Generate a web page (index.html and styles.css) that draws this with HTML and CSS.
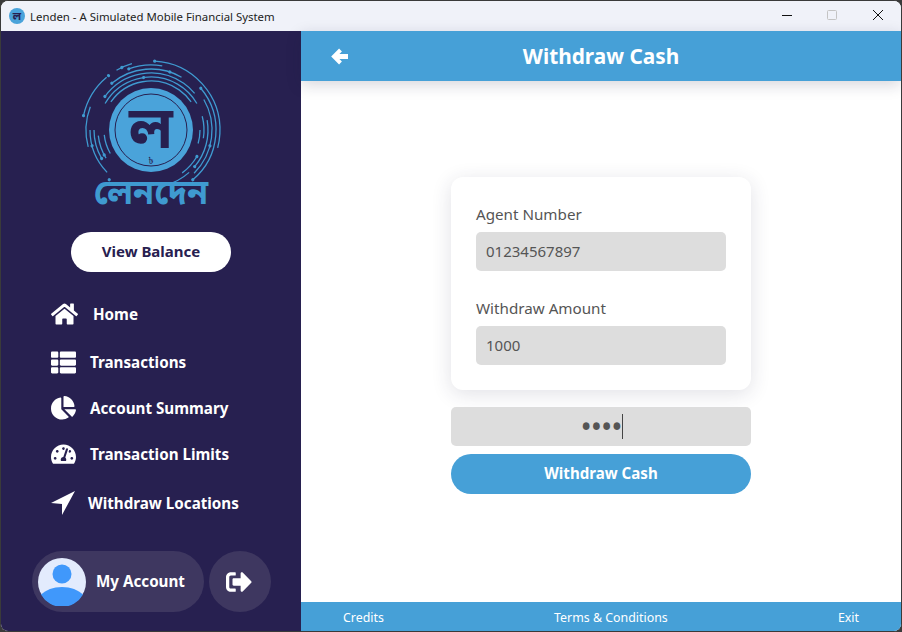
FILE: index.html
```html
<!DOCTYPE html>
<html lang="en">
<head>
    <meta charset="UTF-8">
    <title>Lenden - A Simulated Mobile Financial System</title>
    <link rel="stylesheet" href="styles.css">
</head>
<body>
    <div class="window">
        <div class="titlebar">
            <svg class="appIcon" viewBox="0 0 16 16">
                <circle cx="8" cy="8" r="8" fill="#4aa3da"/>
                <text class="appLetter" x="8" y="11.500" text-anchor="middle">ল</text>
            </svg>
            <span class="appTitle">Lenden - A Simulated Mobile Financial System</span>
            <div class="winButtons">
                <svg class="winBtn" viewBox="0 0 46 30"><path d="M19 14.500h10" stroke="#111" stroke-width="1"/></svg>
                <svg class="winBtn" viewBox="0 0 46 30"><rect x="18.500" y="9.500" width="9" height="9" rx="1" fill="none" stroke="#c4c4c4"/></svg>
                <svg class="winBtn" viewBox="0 0 46 30"><path d="M18 9l10 10M28 9l-10 10" stroke="#111" stroke-width="1"/></svg>
            </div>
        </div>
        <div class="app">
            <div class="sidebar">
                <svg class="logo" viewBox="0 0 150 155">
                    <g fill="none" stroke="#3f9ad0" stroke-width="1.300">
                        <circle cx="75" cy="74" r="69" pathLength="360" stroke-dasharray="102 360" transform="rotate(-87 75 74)"/>
                        <circle cx="75" cy="74" r="69" pathLength="360" stroke-dasharray="38 360" transform="rotate(-168 75 74)"/>
                        <circle cx="75" cy="74" r="69" pathLength="360" stroke-dasharray="14 360" transform="rotate(-120 75 74)"/>
                        <circle cx="75" cy="74" r="65" pathLength="360" stroke-dasharray="30 360" transform="rotate(-110 75 74)"/>
                        <circle cx="75" cy="74" r="65" pathLength="360" stroke-dasharray="90 360" transform="rotate(-40 75 74)"/>
                        <circle cx="75" cy="74" r="65" pathLength="360" stroke-dasharray="36 360" transform="rotate(165 75 74)"/>
                        <circle cx="75" cy="74" r="61" pathLength="360" stroke-dasharray="70 360" transform="rotate(-130 75 74)"/>
                        <circle cx="75" cy="74" r="61" pathLength="360" stroke-dasharray="75 360" transform="rotate(-30 75 74)"/>
                        <circle cx="75" cy="74" r="61" pathLength="360" stroke-dasharray="44 360" transform="rotate(136 75 74)"/>
                        <circle cx="75" cy="74" r="57" pathLength="360" stroke-dasharray="105 360" transform="rotate(-145 75 74)"/>
                        <circle cx="75" cy="74" r="57" pathLength="360" stroke-dasharray="50 360" transform="rotate(-10 75 74)"/>
                        <circle cx="75" cy="74" r="57" pathLength="360" stroke-dasharray="28 360" transform="rotate(48 75 74)"/>
                        <circle cx="75" cy="74" r="57" pathLength="360" stroke-dasharray="30 360" transform="rotate(150 75 74)"/>
                        <circle cx="75" cy="74" r="53" pathLength="360" stroke-dasharray="120 360" transform="rotate(-150 75 74)"/>
                        <circle cx="75" cy="74" r="53" pathLength="360" stroke-dasharray="24 360" transform="rotate(-15 75 74)"/>
                        <circle cx="75" cy="74" r="53" pathLength="360" stroke-dasharray="24 360" transform="rotate(30 75 74)"/>
                        <circle cx="75" cy="74" r="53" pathLength="360" stroke-dasharray="26 360" transform="rotate(148 75 74)"/>
                        <circle cx="75" cy="74" r="49" pathLength="360" stroke-dasharray="110 360" transform="rotate(-145 75 74)"/>
                        <circle cx="75" cy="74" r="49" pathLength="360" stroke-dasharray="16 360" transform="rotate(0 75 74)"/>
                        <circle cx="75" cy="74" r="47" pathLength="360" stroke-dasharray="24 360" transform="rotate(150 75 74)"/>
                    </g>
                    <g fill="#3f9ad0">
                        <circle cx="75" cy="5" r="1.600" transform="rotate(3 75 74)"/>
                        <circle cx="75" cy="5" r="1.600" transform="rotate(-38 75 74)"/>
                        <circle cx="75" cy="5" r="1.600" transform="rotate(-78 75 74)"/>
                        <circle cx="75" cy="5" r="1.600" transform="rotate(-25 75 74)"/>
                        <circle cx="75" cy="9" r="1.600" transform="rotate(50 75 74)"/>
                        <circle cx="75" cy="9" r="1.600" transform="rotate(-20 75 74)"/>
                        <circle cx="75" cy="9" r="1.600" transform="rotate(140 75 74)"/>
                        <circle cx="75" cy="9" r="1.600" transform="rotate(-140 75 74)"/>
                        <circle cx="75" cy="13" r="1.600" transform="rotate(-40 75 74)"/>
                        <circle cx="75" cy="13" r="1.600" transform="rotate(18 75 74)"/>
                        <circle cx="75" cy="13" r="1.600" transform="rotate(105 75 74)"/>
                        <circle cx="75" cy="13" r="1.600" transform="rotate(-105 75 74)"/>
                        <circle cx="75" cy="17" r="1.600" transform="rotate(-54 75 74)"/>
                        <circle cx="75" cy="17" r="1.600" transform="rotate(130 75 74)"/>
                        <circle cx="75" cy="17" r="1.600" transform="rotate(-120 75 74)"/>
                        <circle cx="75" cy="21" r="1.600" transform="rotate(-8 75 74)"/>
                        <circle cx="75" cy="21" r="1.600" transform="rotate(120 75 74)"/>
                        <circle cx="75" cy="21" r="1.600" transform="rotate(-118 75 74)"/>
                    </g>
                    <circle cx="75" cy="74" r="42" fill="#4aa3da"/>
                    <circle cx="75" cy="74" r="36" fill="none" stroke="#272050" stroke-width="1"/>
                    <text class="logoLetter" x="75" y="92" text-anchor="middle">ল</text>
                    <text class="logoTaka" x="75" y="108" text-anchor="middle">৳</text>
                    <text class="logoWord" x="75" y="148" text-anchor="middle">লেনদেন</text>
                </svg>
                <button class="balanceBtn"><span class="btnText">View Balance</span></button>
                <div class="nav">
                    <div class="navItem homeItem">
                        <span class="navIcon"><svg width="27" viewBox="0 0 576 512"><path d="M280.37 148.26L96 300.11V464a16 16 0 0 0 16 16l112.06-.29a16 16 0 0 0 15.92-16V368a16 16 0 0 1 16-16h64a16 16 0 0 1 16 16v95.64a16 16 0 0 0 16 16.05L464 480a16 16 0 0 0 16-16V300L295.67 148.26a12.19 12.19 0 0 0-15.3 0zM571.6 251.47L488 182.56V44.05a12 12 0 0 0-12-12h-56a12 12 0 0 0-12 12v72.61L318.47 43a48 48 0 0 0-61 0L4.34 251.47a12 12 0 0 0-1.6 16.9l25.5 31A12 12 0 0 0 45.15 301l235.22-193.74a12.19 12.19 0 0 1 15.3 0L530.9 301a12 12 0 0 0 16.9-1.6l25.5-31a12 12 0 0 0-1.7-16.93z"/></svg></span>
                        Home
                    </div>
                    <div class="navItem listItem">
                        <span class="navIcon"><svg width="25" viewBox="0 0 512 512"><path d="M149.333 216v80c0 13.255-10.745 24-24 24H24c-13.255 0-24-10.745-24-24v-80c0-13.255 10.745-24 24-24h101.333c13.255 0 24 10.745 24 24zM0 376v80c0 13.255 10.745 24 24 24h101.333c13.255 0 24-10.745 24-24v-80c0-13.255-10.745-24-24-24H24c-13.255 0-24 10.745-24 24zM125.333 32H24C10.745 32 0 42.745 0 56v80c0 13.255 10.745 24 24 24h101.333c13.255 0 24-10.745 24-24V56c0-13.255-10.745-24-24-24zm80 448H488c13.255 0 24-10.745 24-24v-80c0-13.255-10.745-24-24-24H205.333c-13.255 0-24 10.745-24 24v80c0 13.255 10.745 24 24 24zm-24-424v80c0 13.255 10.745 24 24 24H488c13.255 0 24-10.745 24-24V56c0-13.255-10.745-24-24-24H205.333c-13.255 0-24 10.745-24 24zm24 264H488c13.255 0 24-10.745 24-24v-80c0-13.255-10.745-24-24-24H205.333c-13.255 0-24 10.745-24 24v80c0 13.255 10.745 24 24 24z"/></svg></span>
                        Transactions
                    </div>
                    <div class="navItem">
                        <span class="navIcon"><svg width="25" viewBox="0 0 544 512"><path d="M527.79 288H290.5l158.03 158.03c6.04 6.04 15.98 6.53 22.19.68 38.7-36.46 65.32-85.61 73.13-140.86 1.34-9.46-6.51-17.85-16.06-17.85zm-15.83-64.8C503.72 103.74 408.26 8.28 288.8.04 279.68-.59 272 7.1 272 16.24V240h223.77c9.14 0 16.82-7.68 16.19-16.8zM224 288V50.71c0-9.55-8.39-17.4-17.84-16.06C86.99 51.49-4.1 155.6.14 280.37 4.5 408.51 114.83 513.59 243.03 511.98c50.4-.63 96.97-16.87 135.26-44.03 7.9-5.6 8.42-17.23 1.57-24.08L224 288z"/></svg></span>
                        Account Summary
                    </div>
                    <div class="navItem">
                        <span class="navIcon"><svg width="25" viewBox="0 0 576 512"><path d="M288 32C128.94 32 0 160.94 0 320c0 52.8 14.25 102.26 39.06 144.8 5.61 9.62 16.3 15.2 27.44 15.2h443c11.14 0 21.83-5.58 27.44-15.2C561.75 422.26 576 372.8 576 320c0-159.06-128.94-288-288-288zm0 64c14.71 0 26.58 10.13 30.32 23.65-1.11 2.26-2.64 4.23-3.45 6.67l-9.22 27.67c-5.13 3.49-10.97 6.01-17.64 6.01-17.67 0-32-14.33-32-32S270.33 96 288 96zM96 384c-17.67 0-32-14.33-32-32s14.33-32 32-32 32 14.33 32 32-14.33 32-32 32zm48-160c-17.67 0-32-14.33-32-32s14.33-32 32-32 32 14.33 32 32-14.33 32-32 32zm246.77-72.41l-61.33 184C343.13 347.33 352 364.54 352 384c0 11.72-3.38 22.55-8.88 32H232.88c-5.5-9.45-8.88-20.28-8.88-32 0-33.94 26.5-61.43 59.9-63.59l61.34-184.01c4.17-12.56 17.73-19.45 30.36-15.17 12.57 4.19 19.35 17.79 15.17 30.36zm14.66 57.2l15.52-46.55c3.47-1.29 7.13-2.23 11.05-2.23 17.67 0 32 14.33 32 32s-14.33 32-32 32c-11.38-.01-20.89-6.28-26.57-15.22zM480 384c-17.67 0-32-14.33-32-32s14.33-32 32-32 32 14.33 32 32-14.33 32-32 32z"/></svg></span>
                        Transaction Limits
                    </div>
                    <div class="navItem locationItem">
                        <span class="navIcon"><svg width="24" viewBox="0 0 24 24"><path d="M24 0L11 24 11 13 0 12z"/></svg></span>
                        Withdraw Locations
                    </div>
                </div>
                <div class="accountRow">
                    <div class="accountPill">
                        <svg class="avatar" viewBox="0 0 48 48">
                            <circle cx="24" cy="24" r="24" fill="#e3ebfd"/>
                            <circle cx="24" cy="16" r="9.500" fill="#4098fb"/>
                            <path d="M3 36.500C8 32 15 29 24 29s16 3 21 7.500A24 24 0 0 1 3 36.500z" fill="#4098fb"/>
                        </svg>
                        <span class="btnText">My Account</span>
                    </div>
                    <div class="logoutBtn">
                        <svg width="26" viewBox="0 0 512 512"><path d="M497 273L329 441c-15 15-41 4.500-41-17v-96H152c-13.300 0-24-10.700-24-24v-96c0-13.300 10.700-24 24-24h136V88c0-21.400 25.900-32 41-17l168 168c9.300 9.400 9.300 24.600 0 34zM192 436v-40c0-6.600-5.400-12-12-12H96c-17.700 0-32-14.300-32-32V160c0-17.700 14.300-32 32-32h84c6.600 0 12-5.400 12-12V76c0-6.600-5.400-12-12-12H96c-53 0-96 43-96 96v192c0 53 43 96 96 96h84c6.600 0 12-5.400 12-12z"/></svg>
                    </div>
                </div>
            </div>
            <div class="main">
                <div class="header">
                    <svg class="backArrow" width="17" height="17" viewBox="0 0 17 17">
                        <path d="M9.500 2L3 8.500 9.500 15" fill="none" stroke="white" stroke-width="4"/>
                        <path d="M4 8.500H17" stroke="white" stroke-width="5"/>
                    </svg>
                    <div class="headerTitle">Withdraw Cash</div>
                </div>
                <div class="content">
                    <div class="formStack">
                        <div class="card">
                            <div class="fieldLabel">Agent Number</div>
                            <div class="field">01234567897</div>
                            <div class="fieldLabel secondLabel">Withdraw Amount</div>
                            <div class="field">1000</div>
                        </div>
                        <div class="field pinField"><span class="pinDots">••••</span><span class="caret"></span></div>
                        <button class="withdrawBtn"><span class="btnText">Withdraw Cash</span></button>
                    </div>
                </div>
                <div class="footer">
                    <span>Credits</span>
                    <span>Terms &amp; Conditions</span>
                    <span>Exit</span>
                </div>
            </div>
        </div>
    </div>
</body>
</html>
```

FILE: styles.css
```css
html, body
{
    margin: 0;
    height: 100%;
    background-color: #3a3a3a;
}
body
{
    font-family: "Noto Sans", "Open Sans", sans-serif;
}
.window
{
    height: 630px;
    border: 1px solid #3a3a3a;
    border-radius: 8px;
    overflow: hidden;
    display: flex;
    flex-direction: column;
    background-color: white;
}
.titlebar
{
    height: 30px;
    flex: none;
    display: flex;
    align-items: center;
    background-color: #f0f2f9;
    padding-left: 8px;
}
.appIcon
{
    width: 16px;
    height: 16px;
}
.appLetter
{
    font-size: 11px;
    font-weight: 700;
    fill: #272050;
    font-family: "Noto Sans Bengali", "Noto Sans", sans-serif;
}
.appTitle
{
    font-size: 11.400px;
    color: #222;
    margin-left: 5px;
}
.winButtons
{
    margin-left: auto;
    display: flex;
}
.winBtn
{
    width: 46px;
    height: 30px;
    display: block;
}
.app
{
    flex: 1;
    display: flex;
    min-height: 0;
}
.sidebar
{
    width: 300px;
    flex: none;
    background-color: #272050;
    display: flex;
    flex-direction: column;
    align-items: center;
}
.logo
{
    width: 150px;
    height: 155px;
    margin-top: 25px;
    flex: none;
    overflow: visible;
}
.logoLetter
{
    font-size: 58px;
    font-weight: 700;
    fill: #272050;
    font-family: "Noto Sans Bengali", "Noto Sans", sans-serif;
}
.logoTaka
{
    font-size: 9px;
    fill: #272050;
    font-family: "Noto Sans Bengali", "Noto Sans", sans-serif;
}
.logoWord
{
    font-size: 34px;
    font-weight: 700;
    fill: #3f9ad0;
    font-family: "Noto Sans Bengali", "Noto Sans", sans-serif;
}
.balanceBtn
{
    width: 160px;
    height: 40px;
    margin-top: 21px;
    border: none;
    border-radius: 20px;
    background-color: white;
    color: #272050;
    font-family: inherit;
    font-size: 15px;
    font-weight: 700;
}
.btnText
{
    display: block;
    margin-bottom: 2px;
}
.nav
{
    align-self: stretch;
    padding-left: 50px;
    margin-top: 19px;
}
.navItem
{
    height: 46px;
    display: flex;
    align-items: center;
    color: white;
    font-size: 15.200px;
    font-weight: 700;
}
.listItem
{
    margin-top: 2px;
}
.navIcon
{
    width: 39px;
    flex: none;
    display: flex;
    align-items: center;
}
.navIcon svg
{
    fill: white;
    display: block;
}
.homeItem .navIcon
{
    width: 42px;
}
.locationItem
{
    margin-top: 3px;
}
.locationItem .navIcon
{
    width: 37px;
}
.accountRow
{
    margin-top: auto;
    margin-bottom: 19px;
    align-self: stretch;
    padding-left: 31px;
    display: flex;
    gap: 5px;
}
.accountPill
{
    width: 172px;
    height: 61px;
    border-radius: 31px;
    background-color: #3e3760;
    color: white;
    font-size: 15.200px;
    font-weight: 700;
    display: flex;
    align-items: center;
    gap: 10px;
    padding-left: 6px;
    box-sizing: border-box;
}
.avatar
{
    width: 48px;
    height: 48px;
}
.logoutBtn
{
    width: 62px;
    height: 61px;
    border-radius: 50%;
    background-color: #3e3760;
    display: flex;
    align-items: center;
    justify-content: center;
}
.logoutBtn svg
{
    fill: white;
    margin-left: -2px;
}
.main
{
    flex: 1;
    display: flex;
    flex-direction: column;
    min-width: 0;
}
.header
{
    height: 50px;
    flex: none;
    position: relative;
    background-color: #46a0d7;
    box-shadow: 0 4px 14px rgba(30, 30, 60, 0.18);
    display: flex;
    align-items: center;
    justify-content: center;
}
.backArrow
{
    position: absolute;
    left: 30px;
    top: 17px;
}
.headerTitle
{
    color: white;
    font-size: 20.800px;
    font-weight: 700;
}
.content
{
    flex: 1;
    display: flex;
    justify-content: center;
    padding-top: 96px;
}
.formStack
{
    width: 300px;
}
.card
{
    background-color: white;
    border-radius: 12px;
    padding: 26px 25px 25px;
    box-shadow: 0 4px 20px rgba(40, 40, 80, 0.14);
    margin-bottom: 17px;
}
.fieldLabel
{
    font-size: 15.200px;
    line-height: 23px;
    color: #555;
    margin-bottom: 6px;
}
.secondLabel
{
    margin-top: 26px;
}
.field
{
    height: 39px;
    line-height: 39px;
    background-color: #dddddd;
    border-radius: 5px;
    padding-left: 10px;
    font-size: 15px;
    color: #555;
}
.pinField
{
    padding-left: 0;
    display: flex;
    justify-content: center;
    align-items: center;
}
.pinDots
{
    font-size: 30px;
    letter-spacing: -1px;
    margin-left: 1px;
}
.caret
{
    width: 1px;
    height: 25px;
    background-color: #444;
}
.withdrawBtn
{
    width: 100%;
    height: 40px;
    margin-top: 8px;
    border: none;
    border-radius: 20px;
    background-color: #46a0d7;
    color: white;
    font-family: inherit;
    font-size: 15.100px;
    font-weight: 700;
}
.footer
{
    height: 29px;
    flex: none;
    background-color: #46a0d7;
    color: white;
    font-size: 12.400px;
    display: flex;
    align-items: center;
    justify-content: space-between;
    padding: 2px 42px 0;
    box-sizing: border-box;
}
```
